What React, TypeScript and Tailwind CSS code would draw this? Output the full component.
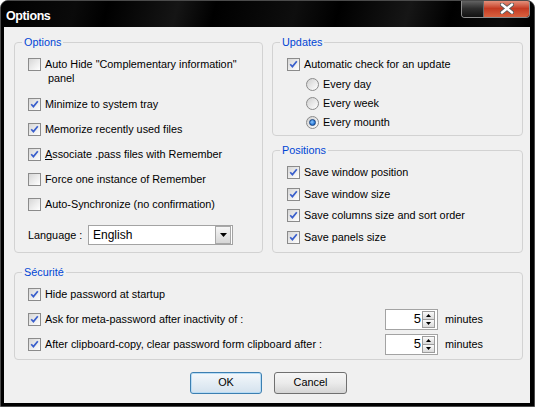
import React from "react";

function Check({ checked = false }: { checked?: boolean }) {
  return (
    <span className="mt-px flex h-[13px] w-[13px] shrink-0 items-center justify-center border border-[#8b8b8b] bg-gradient-to-br from-[#d6d6d6] via-[#ebebeb] to-white">
      {checked && (
        <svg width="9" height="9" viewBox="0 0 9 9">
          <path d="M1.2 4.2 L3.4 6.6 L7.8 1.2" fill="none" stroke="#3a5fcc" strokeWidth="1.7" />
        </svg>
      )}
    </span>
  );
}

function Radio({ selected = false }: { selected?: boolean }) {
  return (
    <span className="mt-px flex h-[13px] w-[13px] shrink-0 items-center justify-center rounded-full border border-[#8b8b8b] bg-gradient-to-br from-[#cfcfcf] via-[#e8e8e8] to-white">
      {selected && (
        <span className="h-[7px] w-[7px] rounded-full border border-[#17427f] bg-[radial-gradient(circle_at_40%_40%,#8cc8ff,#1f6fd1_70%)]" />
      )}
    </span>
  );
}

function CheckRow({ checked, children, className = "" }: { checked?: boolean; children: React.ReactNode; className?: string }) {
  return (
    <div className={`flex items-start gap-[4px] leading-[14px] ${className}`}>
      <Check checked={checked} />
      <span>{children}</span>
    </div>
  );
}

function RadioRow({ selected, children, className = "" }: { selected?: boolean; children: React.ReactNode; className?: string }) {
  return (
    <div className={`flex items-start gap-[4px] leading-[14px] ${className}`}>
      <Radio selected={selected} />
      <span>{children}</span>
    </div>
  );
}

function Group({ title, children, className = "" }: { title: string; children: React.ReactNode; className?: string }) {
  return (
    <fieldset className={`min-w-0 rounded-[4px] border border-[#d2d2d2] ${className}`}>
      <legend className="ml-[7px] px-[2px] leading-[13px] text-[#0046d5]">{title}</legend>
      {children}
    </fieldset>
  );
}

function Spin() {
  return (
    <div className="flex h-[21px] w-[53px] shrink-0 items-center border border-[#a3a3a3] bg-white">
      <span className="flex-1 pr-[1px] text-right text-[13px] leading-[14px]">5</span>
      <div className="mr-[2px] flex h-[17px] w-[13px] flex-col">
        <span className="flex flex-1 items-center justify-center border border-[#9c9c9c] bg-gradient-to-b from-[#fafafa] to-[#dadada]">
          <svg width="5" height="3" viewBox="0 0 5 3"><path d="M0 3 L2.5 0 L5 3Z" fill="#000" /></svg>
        </span>
        <span className="flex flex-1 items-center justify-center border border-t-0 border-[#9c9c9c] bg-gradient-to-b from-[#fafafa] to-[#dadada]">
          <svg width="5" height="3" viewBox="0 0 5 3"><path d="M0 0 L2.5 3 L5 0Z" fill="#000" /></svg>
        </span>
      </div>
    </div>
  );
}

function SecRow({ checked, children, spin }: { checked?: boolean; children: React.ReactNode; spin?: boolean }) {
  return (
    <div className="flex h-[21px] items-center">
      <div className="flex flex-1 items-center gap-[4px] leading-[14px]">
        <span className="-mt-px"><Check checked={checked} /></span>
        <span>{children}</span>
      </div>
      {spin && (
        <>
          <Spin />
          <span className="w-[84px] pl-[7px]">minutes</span>
        </>
      )}
    </div>
  );
}

export default function App() {
  return (
    <div className="flex h-[407px] w-[535px] flex-col overflow-hidden rounded-t-[8px] border border-[#4b4b4b] bg-black font-['Liberation_Sans',Arial,sans-serif] text-[10.85px] text-black">
      {/* Title bar */}
      <div className="flex h-[26px] shrink-0 items-start justify-between bg-[linear-gradient(105deg,#000_0%,#0a0a0a_14%,#000_20%,#151515_33%,#000_40%,#0e0e0e_55%,#000_63%,#161616_76%,#000_84%,#0b0b0b_94%,#000_100%)]">
        <span className="pl-[5px] pt-[8px] text-[12.5px] font-bold leading-[14px] tracking-[-0.4px] text-white">Options</span>
        <div className="-mt-px mr-[4px] flex h-[18px] overflow-hidden rounded-b-[4px] border border-t-0 border-[#8d8d8d]">
          <span className="w-[22px] border-r border-[#6b6b6b] bg-gradient-to-b from-[#6a6a6a] via-[#2e2e2e] to-[#111]" />
          <span className="flex w-[45px] items-center justify-center bg-gradient-to-b from-[#e79a86] via-[#c43a22] to-[#d8613f]">
            <svg width="14" height="11" viewBox="0 0 14 11">
              <path d="M2 1.5 L12 9.5 M12 1.5 L2 9.5" stroke="#5a5a5a" strokeWidth="4.2" strokeLinecap="round" />
              <path d="M2 1.5 L12 9.5 M12 1.5 L2 9.5" stroke="#fff" strokeWidth="2.4" strokeLinecap="round" />
            </svg>
          </span>
        </div>
      </div>

      {/* Client area */}
      <div className="mb-[3px] ml-[3px] mr-[4px] flex flex-1 flex-col bg-[#f0f0f0] pl-[10px] pr-[7px] pt-[9px]">
        <div className="grid grid-cols-[249px_251px] gap-x-[9px]">
          <Group title="Options">
            <div className="flex flex-col pb-[6px] pl-[13px] pt-[8px]">
              <CheckRow>
                Auto Hide "Complementary information"
                <br />
                <span className="pl-[3px]">panel</span>
              </CheckRow>
              <CheckRow checked className="mt-[12px]">Minimize to system tray</CheckRow>
              <CheckRow checked className="mt-[11px]">Memorize recently used files</CheckRow>
              <CheckRow checked className="mt-[11px]">
                <span className="underline">A</span>ssociate .pass files with Remember
              </CheckRow>
              <CheckRow className="mt-[11px]">Force one instance of Remember</CheckRow>
              <CheckRow className="mt-[11px]">Auto-Synchronize (no confirmation)</CheckRow>
              <div className="mt-[14px] flex items-center">
                <span className="w-[60px]">Language :</span>
                <div className="flex h-[20px] w-[145px] items-center border border-[#a3a3a3] bg-white">
                  <span className="flex-1 pl-[4px] text-[12px]">English</span>
                  <span className="mr-px flex h-[18px] w-[16px] items-center justify-center border border-[#a8a8a8] bg-gradient-to-b from-[#f6f6f6] to-[#d6d6d6]">
                    <svg width="7" height="4" viewBox="0 0 7 4"><path d="M0 0 L7 0 L3.5 4Z" fill="#000" /></svg>
                  </span>
                </div>
              </div>
            </div>
          </Group>

          <div className="flex flex-col">
            <Group title="Updates">
              <div className="flex flex-col pb-[6px] pl-[14px] pt-[8px]">
                <CheckRow checked>Automatic check for an update</CheckRow>
                <RadioRow className="ml-[19px] mt-[6px]">Every day</RadioRow>
                <RadioRow className="ml-[19px] mt-[5px]">Every week</RadioRow>
                <RadioRow selected className="ml-[19px] mt-[5px]">Every mounth</RadioRow>
              </div>
            </Group>
            <Group title="Positions" className="mt-[8px] flex-1">
              <div className="flex flex-col gap-[7.5px] pb-[8px] pl-[14px] pt-[8px]">
                <CheckRow checked>Save window position</CheckRow>
                <CheckRow checked>Save window size</CheckRow>
                <CheckRow checked>Save columns size and sort order</CheckRow>
                <CheckRow checked>Save panels size</CheckRow>
              </div>
            </Group>
          </div>
        </div>

        <Group title="Sécurité" className="mt-[13px]">
          <div className="flex flex-col gap-[4px] pb-[4px] pl-[13px] pt-[5px]">
            <SecRow checked>Hide password at startup</SecRow>
            <SecRow checked spin>Ask for meta-password after inactivity of :</SecRow>
            <SecRow checked spin>After clipboard-copy, clear password form clipboard after :</SecRow>
          </div>
        </Group>

        <div className="mt-[12px] flex justify-center gap-[12px]">
          <button className="h-[22px] w-[72px] rounded-[3px] border border-[#3c7fb1] bg-gradient-to-b from-[#f4f8fb] to-[#d4e2ee] shadow-[inset_0_0_0_1px_#b8dcf5]">
            OK
          </button>
          <button className="h-[22px] w-[73px] rounded-[3px] border border-[#707070] bg-gradient-to-b from-[#f6f6f6] via-[#ebebeb] to-[#d5d5d5]">
            Cancel
          </button>
        </div>
      </div>
    </div>
  );
}
